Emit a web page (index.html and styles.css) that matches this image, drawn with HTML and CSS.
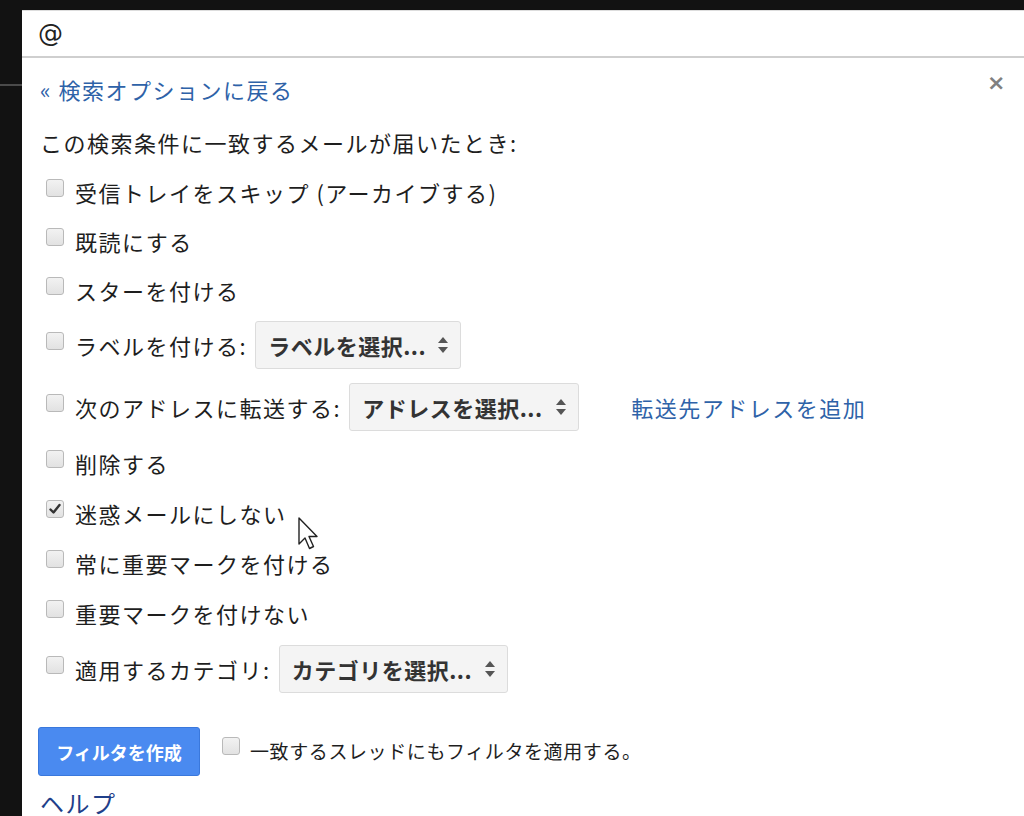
FILE: index.html
```html
<!DOCTYPE html>
<html lang="ja">
<head>
<meta charset="utf-8">
<link rel="stylesheet" href="styles.css">
</head>
<body>
<div class="gutter"><div class="gutter-line"></div></div>
<div class="panel">
  <div class="search">@</div>
  <div class="body">
    <div class="back-row">
      <a class="link back">« 検索オプションに戻る</a>
      <span class="close">×</span>
    </div>
    <div class="heading">この検索条件に一致するメールが届いたとき:</div>
    <div class="row r49"><span class="cb"></span><span>受信トレイをスキップ (アーカイブする)</span></div>
    <div class="row r49"><span class="cb"></span><span>既読にする</span></div>
    <div class="row r49"><span class="cb"></span><span>スターを付ける</span></div>
    <div class="row r62"><span class="cb"></span><span>ラベルを付ける:</span><span class="select w206">ラベルを選択...<span class="arr"></span></span></div>
    <div class="row r62"><span class="cb"></span><span>次のアドレスに転送する:</span><span class="select w230">アドレスを選択...<span class="arr"></span></span><a class="link fwd">転送先アドレスを追加</a></div>
    <div class="row r50"><span class="cb"></span><span>削除する</span></div>
    <div class="row r50 spam"><span class="cb checked"><svg viewBox="0 0 18 18" width="18" height="18"><path d="M4.5 9.5 L7.5 12.5 L13.5 5" fill="none" stroke="#333" stroke-width="2.4" stroke-linecap="round" stroke-linejoin="round"/></svg></span><span>迷惑メールにしない</span>
      <svg class="cursor" viewBox="0 0 22 36" width="22" height="36"><path d="M1 1 L1 27 L7 21 L11.5 31.5 L15.5 29.5 L11 19.5 L19 19.5 Z" fill="#fff" stroke="#222" stroke-width="1.4" stroke-linejoin="round"/></svg>
    </div>
    <div class="row r50"><span class="cb"></span><span>常に重要マークを付ける</span></div>
    <div class="row r50"><span class="cb"></span><span>重要マークを付けない</span></div>
    <div class="row r62"><span class="cb"></span><span>適用するカテゴリ:</span><span class="select w229">カテゴリを選択...<span class="arr"></span></span></div>
    <div class="footer">
      <button class="create">フィルタを作成</button>
      <span class="cb small"></span><span class="apply">一致するスレッドにもフィルタを適用する。</span>
    </div>
    <a class="help">ヘルプ</a>
  </div>
</div>
</body>
</html>
```
FILE: styles.css
```css
html, body {
  margin: 0;
  height: 816px;
  overflow: hidden;
}
body {
  background: #121212;
  display: flex;
  font-family: "Noto Sans CJK JP", "Noto Sans", sans-serif;
  color: #1e1e1e;
}
.gutter {
  width: 22px;
  flex: none;
  padding-top: 84px;
}
.gutter-line {
  height: 2px;
  background: #4a4a4a;
}
.panel {
  flex: 1;
  margin-top: 10px;
  background: #fff;
  display: flex;
  flex-direction: column;
}
.search {
  flex: none;
  height: 45px;
  border-bottom: 2px solid #cfcfcf;
  border-top: 1px solid #ddd;
  display: flex;
  align-items: center;
  padding-left: 16px;
  font-size: 25px;
  color: #222;
  font-family: "DejaVu Sans", sans-serif;
}
.body {
  flex: none;
  padding: 7px 20px 0 18px;
  font-size: 22px;
  letter-spacing: 1.5px;
}
.back-row {
  height: 48px;
  display: flex;
  align-items: center;
  justify-content: space-between;
}
.link {
  color: #2e62a8;
  text-decoration: none;
}
.close {
  color: #808080;
  font-weight: bold;
  font-size: 22px;
  font-family: "DejaVu Sans", sans-serif;
  margin-right: -3px;
  margin-top: -14px;
}
.heading {
  height: 50px;
  margin-top: 4px;
  display: flex;
  align-items: center;
}
.row {
  display: flex;
  align-items: center;
}
.r49 { height: 49px; }
.r50 { height: 50px; }
.r62 { height: 62px; }
.cb {
  width: 16px;
  height: 16px;
  border: 1px solid #b9b9b9;
  border-radius: 3px;
  background: linear-gradient(#f2f2f2, #e2e2e2);
  margin: -8px 11px 0 6px;
  flex: none;
  position: relative;
}
.cb svg {
  position: absolute;
  left: -1px;
  top: -1px;
}
.select {
  display: inline-flex;
  align-items: center;
  justify-content: space-between;
  margin-left: 8px;
  padding: 0 12px 0 12px;
  background: #f4f4f4;
  border: 1px solid #dcdcdc;
  border-radius: 3px;
  font-weight: bold;
  color: #333;
  box-sizing: border-box;
  height: 48px;
  letter-spacing: 0.5px;
}
.w206 { width: 206px; }
.w230 { width: 230px; }
.w229 { width: 229px; }
.arr {
  width: 10px;
  height: 16px;
  position: relative;
}
.arr::before, .arr::after {
  content: "";
  position: absolute;
  left: 0;
  border-left: 5px solid transparent;
  border-right: 5px solid transparent;
}
.arr::before {
  top: 0;
  border-bottom: 6px solid #555;
}
.arr::after {
  bottom: 0;
  border-top: 6px solid #555;
}
.fwd {
  margin-left: 52px;
}
.spam {
  position: relative;
}
.cursor {
  position: absolute;
  left: 258px;
  top: 29px;
}
.footer {
  margin-top: 27px;
  height: 49px;
  display: flex;
  align-items: center;
}
.create {
  width: 162px;
  height: 49px;
  margin-left: -2px;
  background: #4a8af0;
  border: 1px solid #3a78dc;
  border-radius: 3px;
  color: #fff;
  font-family: inherit;
  font-weight: bold;
  font-size: 18px;
  letter-spacing: 0;
  padding: 0;
}
.cb.small {
  margin: -12px 10px 0 22px;
}
.apply {
  font-size: 19px;
  letter-spacing: 0.6px;
  margin-top: -2px;
}
.help {
  display: block;
  margin-top: 12px;
  color: #1f3f8a;
  font-size: 24px;
  line-height: 30px;
}
```
